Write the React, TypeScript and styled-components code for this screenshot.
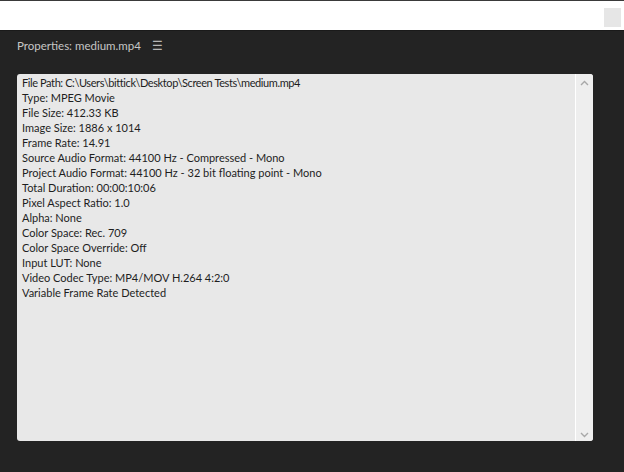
import React from 'react';
import styled, { createGlobalStyle } from 'styled-components';

const GlobalStyle = createGlobalStyle`
  html, body {
    margin: 0;
    padding: 0;
    background: #ffffff;
  }
  body {
    font-family: Lato, "Open Sans", sans-serif;
  }
`;

const Page = styled.div`
  width: 624px;
  height: 472px;
  display: flex;
  flex-direction: column;
  overflow: hidden;
`;

const TopStrip = styled.div`
  height: 30px;
  border-top: 1px solid #3a3a3a;
  background: #ffffff;
  display: flex;
  justify-content: flex-end;
  align-items: flex-start;
  padding: 7px 3px 0 0;
  box-sizing: border-box;
`;

const TinyButton = styled.div`
  width: 17px;
  height: 19px;
  background: #e6e6e6;
`;

const Panel = styled.div`
  flex: 1;
  background: #232323;
  border-top: 1px solid #1a1a1a;
  display: flex;
  flex-direction: column;
  padding: 0 31px 31px 17px;
`;

const Header = styled.div`
  height: 30px;
  padding-bottom: 2px;
  display: flex;
  align-items: center;
  gap: 11px;
  color: #c6c6c6;
  font-size: 11.5px;
  box-sizing: border-box;
`;

const Title = styled.span``;

const Menu = styled.span`
  font-size: 12px;
  color: #b5b5b5;
`;

const Box = styled.div`
  margin-top: 13px;
  flex: 1;
  background: #e8e8e8;
  border-radius: 3px;
  display: flex;
  overflow: hidden;
`;

const Content = styled.div`
  flex: 1;
  padding: 1px 5px;
  color: #1e1e1e;
  font-size: 11px;
  line-height: 15px;
`;

const Line = styled.div<{ $tight?: boolean }>`
  white-space: nowrap;
  letter-spacing: ${(p) => (p.$tight ? '-0.4px' : 'normal')};
`;

const Scrollbar = styled.div`
  width: 17px;
  border-left: 1px solid #ffffff;
  background: #eeeeee;
  display: flex;
  flex-direction: column;
  justify-content: space-between;
  align-items: center;
  padding: 6px 0 3px;
`;

const Chevron = ({ down }: { down?: boolean }) => (
  <svg width="9" height="6" viewBox="0 0 9 6">
    <path
      d={down ? 'M1 1 L4.5 4.5 L8 1' : 'M1 5 L4.5 1.5 L8 5'}
      fill="none"
      stroke="#a8a8a8"
      strokeWidth="1.4"
    />
  </svg>
);

const lines = [
  'File Path: C:\\Users\\bittick\\Desktop\\Screen Tests\\medium.mp4',
  'Type: MPEG Movie',
  'File Size: 412.33 KB',
  'Image Size: 1886 x 1014',
  'Frame Rate: 14.91',
  'Source Audio Format: 44100 Hz - Compressed - Mono',
  'Project Audio Format: 44100 Hz - 32 bit floating point - Mono',
  'Total Duration: 00:00:10:06',
  'Pixel Aspect Ratio: 1.0',
  'Alpha: None',
  'Color Space: Rec. 709',
  'Color Space Override: Off',
  'Input LUT: None',
  'Video Codec Type: MP4/MOV H.264 4:2:0',
  'Variable Frame Rate Detected',
];

export default function App() {
  return (
    <Page>
      <GlobalStyle />
      <TopStrip>
        <TinyButton />
      </TopStrip>
      <Panel>
        <Header>
          <Title>Properties: medium.mp4</Title>
          <Menu>☰</Menu>
        </Header>
        <Box>
          <Content>
            {lines.map((l) => (
              // the path line runs wider in Lato than in the original font
              <Line key={l} $tight={l.includes('\\')}>
                {l}
              </Line>
            ))}
          </Content>
          <Scrollbar>
            <Chevron />
            <Chevron down />
          </Scrollbar>
        </Box>
      </Panel>
    </Page>
  );
}
